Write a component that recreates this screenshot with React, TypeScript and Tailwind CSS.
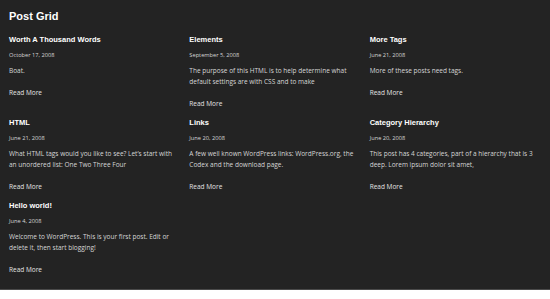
import React from 'react'

const posts = [
  { title: 'Worth A Thousand Words', date: 'October 17, 2008', excerpt: 'Boat.' },
  { title: 'Elements', date: 'September 5, 2008', excerpt: 'The purpose of this HTML is to help determine what default settings are with CSS and to make' },
  { title: 'More Tags', date: 'June 21, 2008', excerpt: 'More of these posts need tags.' },
  { title: 'HTML', date: 'June 21, 2008', excerpt: "What HTML tags would you like to see? Let\u2019s start with an unordered list: One Two Three Four" },
  { title: 'Links', date: 'June 20, 2008', excerpt: 'A few well known WordPress links: WordPress.org, the Codex and the download page.' },
  { title: 'Category Hierarchy', date: 'June 20, 2008', excerpt: 'This post has 4 categories, part of a hierarchy that is 3 deep. Lorem ipsum dolor sit amet,' },
  { title: 'Hello world!', date: 'June 4, 2008', excerpt: 'Welcome to WordPress. This is your first post. Edit or delete it, then start blogging!' },
]

function App() {
  return (
    <div className="bg-white min-h-[299px]">
      <div className="bg-[#232323] h-[290px] border-b border-[#4a4a4a] px-[9px] pt-[9px]">
        <h1 className="text-[11px] leading-[14px] font-bold text-white font-['Liberation_Sans',Arial,sans-serif]">Post Grid</h1>

        {/* grid of posts */}
        <div className="grid grid-cols-3 gap-x-[9px] gap-y-[9px] mt-[11.5px]">
          {posts.map((p) => (
            <div key={p.title} className="flex flex-col">
              <h2 className="text-[7.5px] leading-[10px] font-bold text-white font-['Liberation_Sans',Arial,sans-serif]">{p.title}</h2>
              <p className="mt-[6.5px] text-[5.7px] leading-[8px] text-[#d6d6d6] font-['Open_Sans',sans-serif]">{p.date}</p>
              <p className="mt-[5.5px] text-[6.5px] leading-[11px] text-[#d6d6d6] font-['Open_Sans',sans-serif]">{p.excerpt}</p>
              <a href="#" className="mt-[11px] text-[6.5px] leading-[11px] text-[#e2e2e2] font-['Open_Sans',sans-serif]">Read More</a>
            </div>
          ))}
        </div>
      </div>
    </div>
  )
}

export default App
